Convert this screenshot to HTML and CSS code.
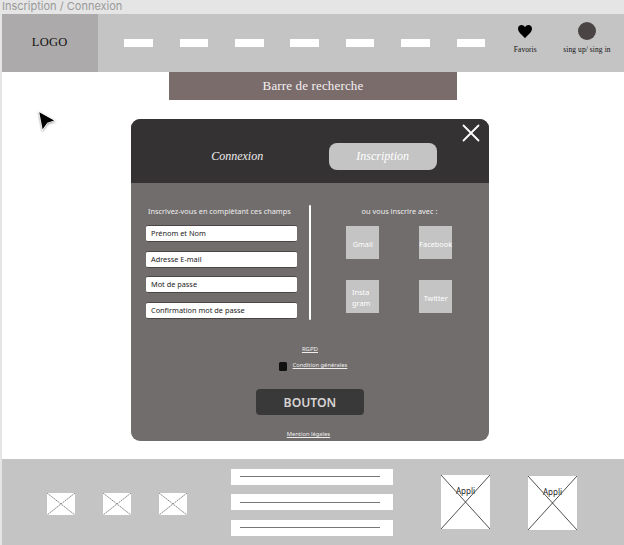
FILE: index.html
```html
<!DOCTYPE html>
<html lang="fr">
<head>
<meta charset="utf-8">
<title>Inscription / Connexion</title>
<link rel="stylesheet" href="styles.css">
</head>
<body>
<div class="frame-title">Inscription / Connexion</div>
<div class="frame">
  <header class="header">
    <div class="logo"><span>LOGO</span></div>
    <nav class="nav"><i></i><i></i><i></i><i></i><i></i><i></i><i></i></nav>
    <div class="action favorites">
      <svg class="heart" viewBox="0 0 16 15"><path d="M8 14.2C6.2 11.7 1 8.6 1 4.5C1 .4 6.3-.3 8 3.2C9.700-.3 15 .4 15 4.500C15 8.600 9.800 11.700 8 14.200Z"/></svg>
      <span>Favoris</span>
    </div>
    <div class="action account"><b class="avatar"></b><span>sing up/ sing in</span></div>
  </header>
  <div class="search"><span>Barre de recherche</span></div>
  <main class="modal">
    <div class="tabs">
      <div class="tab">Connexion</div>
      <div class="tab selected">Inscription</div>
      <svg class="close" viewBox="0 0 18 18"><path d="M1.500 1.500L16.500 16.500M16.500 1.500L1.500 16.500"/></svg>
    </div>
    <div class="columns">
      <section class="form">
        <p class="form-title">Inscrivez-vous en complètant ces champs</p>
        <div class="field">Prénom et Nom</div>
        <div class="field">Adresse E-mail</div>
        <div class="field">Mot de passe</div>
        <div class="field">Confirmation mot de passe</div>
      </section>
      <div class="divider"></div>
      <section class="social">
        <p class="social-title">ou vous inscrire avec :</p>
        <div class="tiles">
          <div class="tile">Gmail</div>
          <div class="tile facebook">Facebook</div>
          <div class="tile insta">Insta<br>gram</div>
          <div class="tile twitter">Twitter</div>
        </div>
      </section>
    </div>
    <a class="link rgpd">RGPD</a>
    <div class="terms"><i class="check"></i><a class="link">Condition générales</a></div>
    <div class="button"><span>BOUTON</span></div>
    <a class="link legal">Mention légales</a>
  </main>
  <footer class="footer">
    <div class="pictures">
      <svg class="picture" viewBox="0 0 28 22"><path d="M0 0L28 22M28 0L0 22"/></svg>
      <svg class="picture" viewBox="0 0 28 22"><path d="M0 0L28 22M28 0L0 22"/></svg>
      <svg class="picture" viewBox="0 0 28 22"><path d="M0 0L28 22M28 0L0 22"/></svg>
    </div>
    <div class="lines"><div class="line"></div><div class="line"></div><div class="line"></div></div>
    <div class="app">
      <svg viewBox="0 0 49 54"><path d="M0 0L49 54M49 0L0 54"/></svg><span>Appli</span>
    </div>
    <div class="app second">
      <svg viewBox="0 0 49 54"><path d="M0 0L49 54M49 0L0 54"/></svg><span>Appli</span>
    </div>
  </footer>
</div>
<svg class="cursor" viewBox="0 0 18 20"><path d="M2 2L15.500 9.500L9.300 11.500L5 17.500Z"/></svg>
</body>
</html>
```

FILE: styles.css
```css
* { box-sizing: border-box; }
body {
  margin: 0; width: 624px; height: 545px; overflow: hidden;
  background: #e5e5e5; position: relative;
  font-family: "Noto Sans", sans-serif; font-size: 7.350px;
}
p { margin: 0; }
span, a, p, .tab { white-space: nowrap; }
.frame-title {
  height: 14px; padding-left: 2px;
  font: 11px/13px Inter, sans-serif; color: #999;
}
.frame {
  margin-left: 2px; width: 621.5px; height: 531px; background: #fff;
  display: flex; flex-direction: column;
}
.header { height: 58px; flex: none; display: flex; background: #c4c4c4; font-family: "Liberation Serif", serif; }
.logo {
  width: 95.5px; display: flex; align-items: center; justify-content: center;
  background: #acaaaa; color: #111; font-size: 12.500px; letter-spacing: .3px; padding-bottom: 1px;
}
.nav { margin-left: 26.8px; width: 361px; display: flex; justify-content: space-between; padding-top: 25px; }
.nav i { width: 28.7px; height: 8px; background: #fff; }
.action { display: flex; flex-direction: column; align-items: center; font-size: 7.400px; line-height: 8px; letter-spacing: .12px; color: #111; }
.favorites { width: 40px; margin-left: 20px; padding-top: 10px; }
.heart { width: 16px; height: 15px; margin-bottom: 7px; }
.account { width: 60px; margin-left: 11.700px; padding-top: 8px; }
.avatar { width: 18px; height: 18px; border-radius: 50%; background: #4a4544; margin-bottom: 6px; }
.search {
  flex: none; width: 288px; height: 28px; margin-left: 167px; background: #7b6c6c;
  display: flex; align-items: center; justify-content: center;
  font: 13px "Liberation Serif", serif; letter-spacing: .15px; color: #f4f0f0;
}
.modal {
  flex: none; width: 358.500px; height: 322px; margin: 18.700px 0 0 128.700px;
  border-radius: 9px; overflow: hidden; background: #716d6c;
  display: flex; flex-direction: column; align-items: center; color: #eee;
}
.tabs {
  width: 100%; height: 64.500px; flex: none; background: #353233; display: flex;
  padding: 24.500px 0 0 52.500px; font: italic 12px "Liberation Serif", serif;
}
.tab { width: 108px; height: 26.500px; line-height: 27px; text-align: center; }
.tab.selected { margin-left: 37.500px; border-radius: 8px; background: #c4c4c4; color: #fff; }
.close { width: 18px; height: 18px; margin: -19.500px 0 0 25px; }
.close path { stroke: #fff; stroke-width: 1.800; stroke-linecap: round; }
.columns { width: 100%; height: 137px; flex: none; display: flex; padding-top: 21.500px; }
.form { width: 151px; margin-left: 15.300px; }
.form-title { height: 20.500px; line-height: 13px; margin-left: 2px; }
.field {
  height: 17px; margin-bottom: 8.600px; padding-left: 5px; line-height: 15px;
  background: #fff; border: 1px solid #4a4646; border-width: 1px 0 1px 0; border-radius: 2px; color: #222;
}
.divider { width: 2px; height: 115px; margin-left: 11.700px; background: #fff; border-radius: 1px; }
.social { width: 106px; margin-left: 35.800px; }
.social-title { height: 21.800px; line-height: 13px; text-align: center; }
.tiles { display: grid; grid-template-columns: 32.500px 32.500px; gap: 21.500px 40.500px; }
.tile {
  height: 32.500px; padding-top: 4px; background: #c4c4c4; color: #fff;
  display: flex; align-items: center; justify-content: center; line-height: 11px;
}
.insta { padding: 2px 3px 0 0; }
.link { color: #eee; font-size: 5.800px; line-height: 8px; text-decoration: underline; }
.rgpd { margin-top: 24.500px; font-size: 6px; }
.terms { display: flex; margin: 8.500px 0 0 6px; gap: 5.500px; }
.check { width: 8.500px; height: 8.500px; margin-top: 1px; border-radius: 1.500px; background: #111; }
.button {
  flex: none; width: 108px; height: 26px; margin-top: 18.700px; border-radius: 4px; background: #3a3939;
  display: flex; align-items: center; justify-content: center;
  color: #d8d4d4; font-size: 12.200px; font-weight: 600;
}
.legal { margin: 15px 3px 0 0; }
.footer { flex: none; height: 86px; margin-top: 18.300px; background: #c4c4c4; display: flex; }
.pictures { display: flex; gap: 28px; margin: 34px 0 0 44.500px; }
.picture { width: 28px; height: 22px; background: #fff; }
.picture path { stroke: #555; stroke-width: .7; stroke-dasharray: 2 .7; }
.lines { width: 162px; margin: 10px 0 0 44.500px; }
.line { height: 16px; margin-bottom: 9.500px; padding: 7.500px 13px 0 9px; background: #fff; }
.line::before { content: ""; display: block; height: 1px; background: #777; }
.app { display: grid; width: 49px; height: 54px; margin: 16px 0 0 48px; background: #fff; justify-items: center; }
.app.second { margin: 17px 0 0 38px; }
.app svg, .app span { grid-area: 1 / 1; }
.app svg { width: 49px; height: 54px; }
.app path { stroke: #222; stroke-width: .8; }
.app span { margin-top: 10px; line-height: 11px; font-size: 8px; color: #222; }
.cursor { position: absolute; left: 36.500px; top: 109.500px; width: 20px; height: 22px; filter: drop-shadow(0 1px 1px #0006); }
.cursor path { fill: #000; stroke: #fff; stroke-width: 1.200; paint-order: stroke; }
```
